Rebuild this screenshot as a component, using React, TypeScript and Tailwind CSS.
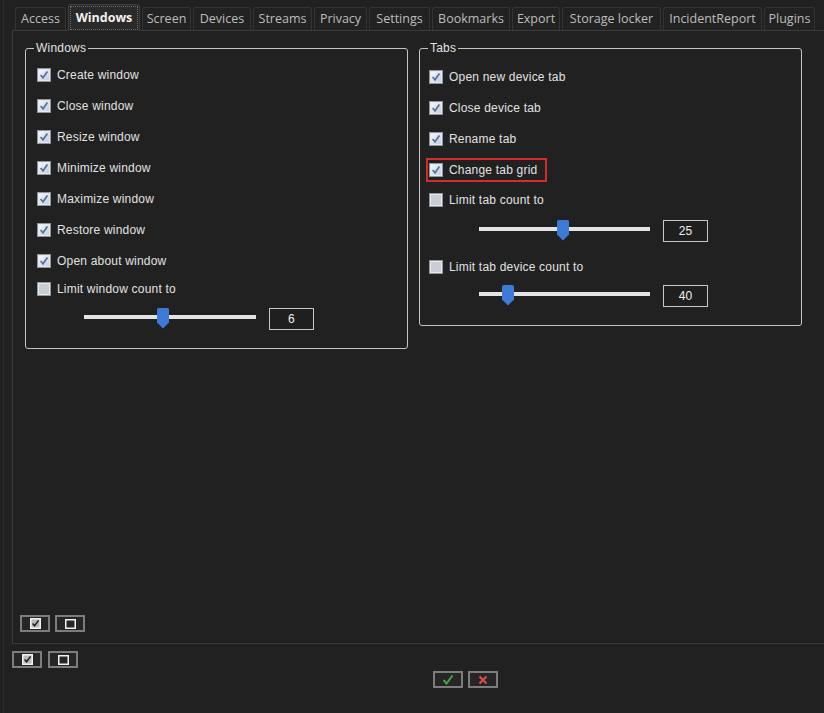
import React from "react";

type Tab = { label: string; w: string; active?: boolean };

const tabs: Tab[] = [
  { label: "Access", w: "w-[51px]" },
  { label: "Windows", w: "w-[72px]", active: true },
  { label: "Screen", w: "w-[49px]" },
  { label: "Devices", w: "w-[58px]" },
  { label: "Streams", w: "w-[59px]" },
  { label: "Privacy", w: "w-[53px]" },
  { label: "Settings", w: "w-[61px]" },
  { label: "Bookmarks", w: "w-[78px]" },
  { label: "Export", w: "w-[48px]" },
  { label: "Storage locker", w: "w-[99px]" },
  { label: "IncidentReport", w: "w-[99px]" },
  { label: "Plugins", w: "w-[51px]" },
];

function CheckBox({ checked }: { checked: boolean }) {
  return (
    <svg width="14" height="14" viewBox="0 0 14 14" className="shrink-0">
      <defs>
        <linearGradient id="cbFill" x1="0" y1="0" x2="1" y2="1">
          <stop offset="0" stopColor="#f5f7fa" />
          <stop offset="1" stopColor="#c6cedb" />
        </linearGradient>
      </defs>
      <rect x="0.5" y="0.5" width="13" height="13" fill="#e6eaef" stroke="#8f959d" />
      <rect x="2" y="2" width="10" height="10" fill={checked ? "url(#cbFill)" : "#c9cdd2"} />
      {checked && (
        <path d="M3.6 7 L6 9.8 L10.4 3.6" fill="none" stroke="#56739e" strokeWidth="1.8" />
      )}
    </svg>
  );
}

function Option({ label, checked }: { label: string; checked: boolean }) {
  return (
    <div className="flex items-center gap-[6px]">
      <CheckBox checked={checked} />
      <span>{label}</span>
    </div>
  );
}

function SliderHandle() {
  return (
    <svg width="12" height="21" viewBox="0 0 12 21">
      <path d="M0 1.5 Q0 0 1.5 0 H10.5 Q12 0 12 1.5 V14.5 L6 20.5 L0 14.5 Z" fill="#3c7ad6" />
    </svg>
  );
}

function Slider({ width, handleLeft, value, gap }: { width: string; handleLeft: number; value: string; gap: string }) {
  return (
    <div className={`flex items-start ${gap}`}>
      <div className={`relative h-[22px] ${width}`}>
        <div className="absolute left-0 right-0 top-[7px] h-[4px] bg-[#e4e4e4]" />
        <div className="absolute top-0" style={{ left: handleLeft }}>
          <SliderHandle />
        </div>
      </div>
      <div className="w-[45px] h-[22px] border border-[#c8c8c8] bg-[#1f1f1f] flex items-center justify-center text-[12px] text-[#eeeeee]">
        {value}
      </div>
    </div>
  );
}

function SmallCheckedIcon() {
  return (
    <svg width="11" height="11" viewBox="0 0 11 11">
      <rect x="0.75" y="0.75" width="9.5" height="9.5" fill="#b8b8b8" stroke="#f2f2f2" strokeWidth="1.5" />
      <path d="M2.6 5.6 L4.6 7.8 L8.6 2.4" fill="none" stroke="#1e1e1e" strokeWidth="1.5" />
    </svg>
  );
}

function SmallEmptyIcon() {
  return (
    <svg width="11" height="10" viewBox="0 0 11 10">
      <rect x="0.75" y="0.75" width="9.5" height="8.5" fill="none" stroke="#f2f2f2" strokeWidth="1.5" />
    </svg>
  );
}

function IconButton({ children }: { children: React.ReactNode }) {
  return (
    <div className="w-[30px] h-[17px] border-2 border-[#7d7d7d] bg-[#262626] flex items-center justify-center">
      {children}
    </div>
  );
}

export default function App() {
  return (
    <div
      className="w-[824px] h-[713px] bg-[#212121] overflow-hidden pl-[3px] flex"
      style={{ fontFamily: '"Liberation Sans", Arial, sans-serif' }}
    >
      <div className="flex-1 border-l border-[#2b2b2b] flex flex-col min-w-0">
        {/* tab strip */}
        <div
          className="h-[30px] pl-[11px] flex items-end gap-[2px] relative z-10"
          style={{ fontFamily: '"Open Sans", "Noto Sans", sans-serif' }}
        >
          {tabs.map((t) =>
            t.active ? (
              <div
                key={t.label}
                className={`${t.w} h-[27px] -mb-[1px] shrink-0 rounded-t-[3px] border border-b-0 border-[#3e3e3e] bg-[#2a2a2a] p-[1px]`}
              >
                <div className="h-full border border-dotted border-[#6c6c6c] flex items-center justify-center text-[12.5px] font-bold text-[#f2f2f2]">
                  {t.label}
                </div>
              </div>
            ) : (
              <div
                key={t.label}
                className={`${t.w} h-[23px] shrink-0 rounded-t-[3px] border border-b-0 border-[#343434] bg-[#222222] flex items-center justify-center text-[12.5px] text-[#bdbdbd]`}
              >
                {t.label}
              </div>
            )
          )}
        </div>

        {/* tab page */}
        <div className="ml-[8px] h-[614px] border-l border-t border-b border-[#3a3a3a] flex flex-col text-[12px] tracking-[0.2px] text-[#e2e2e2]">
          <div className="pt-[10px] pl-[12px] flex items-start gap-[11px]">
            <fieldset className="w-[383px] h-[308px] border border-[#c4c4c4] rounded-[3px]">
              <legend className="ml-[8px] px-[2px] leading-[14px] text-[12px] text-[#e2e2e2]">Windows</legend>
              <div className="pl-[11px] pt-[4px] flex flex-col">
                <div className="h-[31px] flex items-center"><Option label="Create window" checked /></div>
                <div className="h-[31px] flex items-center"><Option label="Close window" checked /></div>
                <div className="h-[31px] flex items-center"><Option label="Resize window" checked /></div>
                <div className="h-[31px] flex items-center"><Option label="Minimize window" checked /></div>
                <div className="h-[31px] flex items-center"><Option label="Maximize window" checked /></div>
                <div className="h-[31px] flex items-center"><Option label="Restore window" checked /></div>
                <div className="h-[31px] flex items-center"><Option label="Open about window" checked /></div>
                <div className="h-[26px] flex items-center"><Option label="Limit window count to" checked={false} /></div>
                <div className="pl-[47px] pt-[6px]">
                  <Slider width="w-[172px]" handleLeft={73} value="6" gap="gap-[13px]" />
                </div>
              </div>
            </fieldset>

            <fieldset className="w-[383px] h-[285px] border border-[#c4c4c4] rounded-[3px]">
              <legend className="ml-[8px] px-[2px] leading-[14px] text-[12px] text-[#e2e2e2]">Tabs</legend>
              <div className="pl-[9px] pt-[6px] flex flex-col">
                <div className="h-[31px] flex items-center"><Option label="Open new device tab" checked /></div>
                <div className="h-[31px] flex items-center"><Option label="Close device tab" checked /></div>
                <div className="h-[31px] flex items-center"><Option label="Rename tab" checked /></div>
                <div className="h-[31px] flex items-center">
                  <div className="-ml-[3px] w-[121px] h-[24px] border-2 border-[#d62b2b] pl-[1px] flex items-center">
                    <Option label="Change tab grid" checked />
                  </div>
                </div>
                <div className="h-[30px] flex items-center"><Option label="Limit tab count to" checked={false} /></div>
                <div className="pl-[50px] pt-[5px]">
                  <Slider width="w-[171px]" handleLeft={78} value="25" gap="gap-[13px]" />
                </div>
                <div className="mt-[10px] h-[30px] flex items-center"><Option label="Limit tab device count to" checked={false} /></div>
                <div className="pl-[50px] pt-[3px]">
                  <Slider width="w-[171px]" handleLeft={23} value="40" gap="gap-[13px]" />
                </div>
              </div>
            </fieldset>
          </div>

          <div className="mt-auto pl-[7px] pb-[11px] flex gap-[5px]">
            <IconButton><SmallCheckedIcon /></IconButton>
            <IconButton><SmallEmptyIcon /></IconButton>
          </div>
        </div>

        {/* page-level selection buttons */}
        <div className="mt-[7px] ml-[8px] flex gap-[6px]">
          <IconButton><SmallCheckedIcon /></IconButton>
          <IconButton><SmallEmptyIcon /></IconButton>
        </div>

        {/* confirm / cancel */}
        <div className="mt-[3px] pl-[429px] flex gap-[5px]">
          <IconButton>
            <svg width="12" height="11" viewBox="0 0 12 11">
              <path d="M1.5 6 L4.5 9.5 L10.5 1.5" fill="none" stroke="#47a447" strokeWidth="2" />
            </svg>
          </IconButton>
          <IconButton>
            <svg width="10" height="10" viewBox="0 0 10 10">
              <path d="M1.5 1.5 L8.5 8.5 M8.5 1.5 L1.5 8.5" fill="none" stroke="#d84b4b" strokeWidth="2.2" />
            </svg>
          </IconButton>
        </div>
      </div>
    </div>
  );
}
